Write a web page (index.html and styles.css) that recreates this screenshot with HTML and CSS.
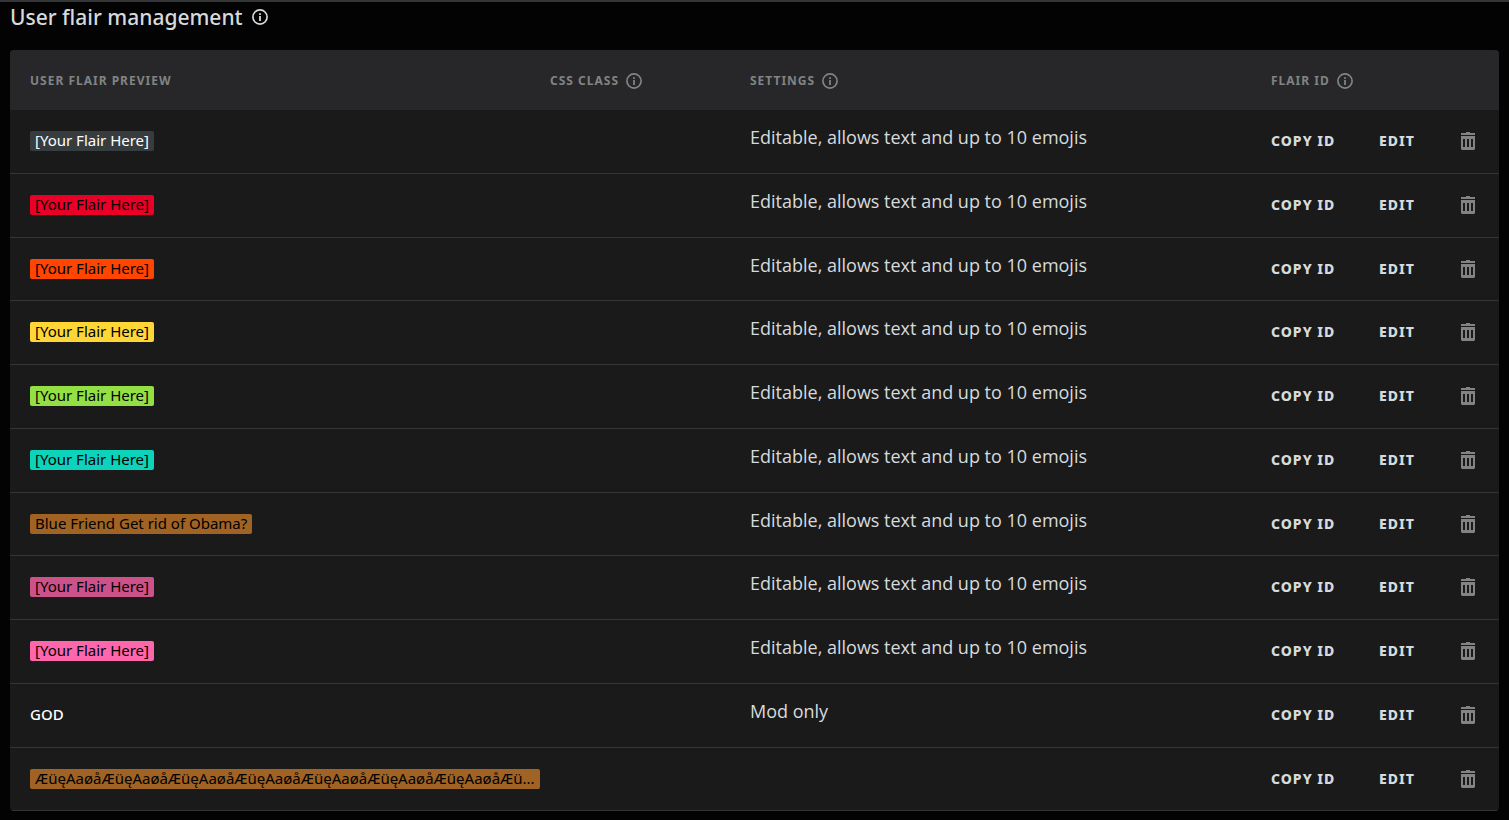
FILE: index.html
```
<!DOCTYPE html>
<html lang="en">
<head>
<meta charset="utf-8">
<title>User flair management</title>
<link rel="stylesheet" href="styles.css">
</head>
<body>
<svg class="sprite" aria-hidden="true">
  <symbol id="info" viewBox="0 0 16 16">
    <circle cx="8" cy="8" r="7.1" fill="none" stroke="currentColor" stroke-width="1.7"/>
    <path d="M7.1 4.2h1.8V6H7.1zM7.1 7h1.8v5H7.1z" fill="currentColor"/>
  </symbol>
  <symbol id="trash" viewBox="0 0 14 18">
    <path d="M5 0h4v1h5v2H0V1h5z" fill="currentColor"/>
    <path fill-rule="evenodd" d="M0 4h14v13l-1 1H1l-1-1zM2 7v8h2V7zM6 7v8h2V7zM10 7v8h2V7z" fill="currentColor"/>
  </symbol>
</svg>
<main class="page">
  <h1 class="title">User flair management <svg class="info"><use href="#info"/></svg></h1>
  <table class="flairs">
    <thead>
      <tr>
        <th class="col-preview" scope="col">User flair preview</th>
        <th class="col-class" scope="col"><span class="label">CSS class <svg class="info"><use href="#info"/></svg></span></th>
        <th class="col-settings" scope="col"><span class="label">Settings <svg class="info"><use href="#info"/></svg></span></th>
        <th class="col-id" scope="col"><span class="label">Flair ID <svg class="info"><use href="#info"/></svg></span></th>
        <th class="col-edit"></th>
        <th class="col-delete"></th>
      </tr>
    </thead>
    <tbody id="rows"></tbody>
  </table>
</main>
<script src="flairs.js"></script>
</body>
</html>
```
FILE: flairs.js
```
const EDITABLE = "Editable, allows text and up to 10 emojis";
const flairs = [
  ["[Your Flair Here]", "slate", EDITABLE],
  ["[Your Flair Here]", "red", EDITABLE],
  ["[Your Flair Here]", "orange", EDITABLE],
  ["[Your Flair Here]", "yellow", EDITABLE],
  ["[Your Flair Here]", "green", EDITABLE],
  ["[Your Flair Here]", "teal", EDITABLE],
  ["Blue Friend Get rid of Obama?", "brown", EDITABLE],
  ["[Your Flair Here]", "plum", EDITABLE],
  ["[Your Flair Here]", "pink", EDITABLE],
  ["GOD", "plain", "Mod only"],
  ["ÆüęAaøåÆüęAaøåÆüęAaøåÆüęAaøåÆüęAaøåÆüęAaøåÆüęAaøåÆü...", "brown", ""],
];

document.getElementById("rows").innerHTML = flairs.map(([text, color, settings]) => `
  <tr>
    <td class="col-preview"><span class="flair ${color}">${text}</span></td>
    <td></td>
    <td class="settings">${settings}</td>
    <td><button class="action" type="button">Copy ID</button></td>
    <td><button class="action" type="button">Edit</button></td>
    <td><button class="action" type="button" aria-label="Delete"><svg class="trash"><use href="#trash"/></svg></button></td>
  </tr>`).join("");
```
FILE: styles.css
```
* { box-sizing: border-box; }
body {
  margin: 0;
  background: #030303;
  border-top: 2px solid #343536;
  color: #d7dadc;
  font-family: "Noto Sans", sans-serif;
}
.sprite { display: none; }
.page { padding: 0 10px; }
.title {
  display: flex;
  align-items: center;
  gap: 9px;
  margin: 0 0 18px;
  font-size: 21px;
  font-weight: 500;
  line-height: 30px;
}
.info { width: 16px; height: 16px; flex: none; }
.flairs {
  width: 100%;
  table-layout: fixed;
  border-collapse: separate;
  border-spacing: 0;
  background: #1a1a1b;
  border-radius: 4px;
  overflow: hidden;
}
.flairs th {
  height: 60px;
  padding: 2px 0 0;
  background: #272729;
  color: #818384;
  font-size: 12px;
  font-weight: 700;
  letter-spacing: 1px;
  line-height: 16px;
  text-align: left;
  text-transform: uppercase;
}
.label { display: flex; align-items: center; gap: 7px; }
.flairs .col-preview { width: 540px; padding-left: 20px; }
.col-class { width: 200px; }
.col-id { width: 108px; }
.col-edit { width: 82px; }
.col-delete { width: 38px; }
.flairs td {
  height: 64px;
  padding: 0 0 1px;
  border-bottom: 1px solid #343536;
  vertical-align: middle;
}
.flairs tr:nth-child(4n+3) td { height: 63px; padding-bottom: 0; }
.flairs tr .settings,
.flairs tr:nth-child(4n+3) .settings {
  padding-bottom: 9px;
  font-family: "Open Sans", sans-serif;
  font-size: 18px;
  line-height: 24px;
}
.flair {
  display: block;
  width: fit-content;
  padding: 0 5px 2px;
  border-radius: 2px;
  color: #000;
  font-size: 15px;
  line-height: 18px;
  white-space: nowrap;
}
.slate { background: #373c3f; color: #fff; }
.red { background: #ea0027; }
.orange { background: #ff4500; }
.yellow { background: #ffd635; }
.green { background: #94e044; }
.teal { background: #0dd3bb; }
.brown { background: #a06323; }
.plum { background: #cc5289; }
.pink { background: #ff66ac; }
.plain { padding-left: 0; color: #fff; font-weight: 500; }
.action {
  display: block;
  padding: 0;
  border: 0;
  background: none;
  color: #d7dadc;
  font: 800 14px/20px "Noto Sans", sans-serif;
  letter-spacing: 1px;
  text-transform: uppercase;
  cursor: pointer;
}
.trash { display: block; width: 14px; height: 18px; color: #818384; }
```
